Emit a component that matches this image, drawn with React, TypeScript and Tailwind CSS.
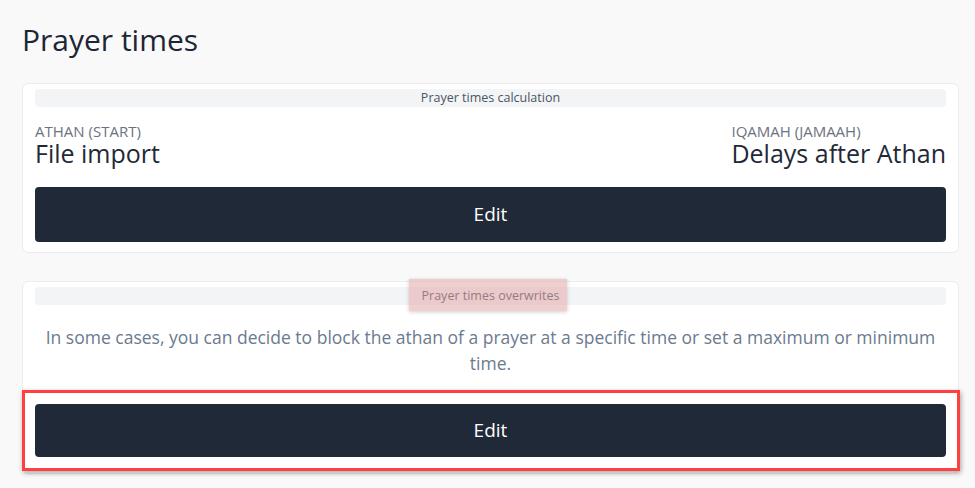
import React from 'react';

const font = { fontFamily: '"Open Sans", "Noto Sans", sans-serif' };

function SectionBar({ label, highlight }: { label: string; highlight?: boolean }) {
  return (
    <div className="relative flex h-[18px] items-center justify-center rounded-sm bg-[#f3f4f6]">
      <span className="text-[12.5px] leading-none text-[#4b5563]">{label}</span>
      {highlight && (
        <div className="absolute left-1/2 top-[-8px] h-[32px] w-[158px] -translate-x-[82px] bg-[#e2a0a0]/50 shadow-[0_1px_4px_rgba(0,0,0,0.2)]" />
      )}
    </div>
  );
}

function EditButton({ tall }: { tall?: boolean }) {
  return (
    <button
      className={`flex w-full items-center justify-center rounded-[4px] bg-[#1f2937] text-[19px] text-white ${
        tall ? 'h-[55px]' : 'h-[53px]'
      }`}
    >
      Edit
    </button>
  );
}

export default function App() {
  return (
    <div className="min-h-screen bg-[#f9f9f9] px-[22px] pt-[19px] pb-10 text-[#1f2937]" style={font}>
      <h1 className="text-[30px] leading-[42px] text-[#1e2535]">Prayer times</h1>

      <div className="mt-[22px] flex w-[937px] flex-col gap-[28px]">
        {/* Calculation */}
        <div className="rounded-md border border-[#ececec] bg-white px-3 pt-[5px] pb-[10px]">
          <SectionBar label="Prayer times calculation" />
          <div className="mt-[14px] flex items-start justify-between">
            <div>
              <div className="text-[15px] leading-[20px] text-[#6b7280]">ATHAN (START)</div>
              <div className="text-[25px] leading-[24px]">File import</div>
            </div>
            <div className="text-left">
              <div className="text-[15px] leading-[20px] text-[#6b7280]">IQAMAH (JAMAAH)</div>
              <div className="text-[25px] leading-[24px]">Delays after Athan</div>
            </div>
          </div>
          <div className="mt-[22px]">
            <EditButton tall />
          </div>
        </div>

        {/* Overwrites */}
        <div className="rounded-md border border-[#ececec] bg-white px-3 pt-[5px] pb-[16px]">
          <SectionBar label="Prayer times overwrites" highlight />
          <p className="mt-[19px] px-2 text-center text-[17.5px] leading-[26px] text-[#6b7a8f]">
            In some cases, you can decide to block the athan of a prayer at a specific time or set a maximum or minimum
            time.
          </p>
          <div className="relative mt-[28px]">
            <EditButton />
            <div className="pointer-events-none absolute -top-[14px] -bottom-[14px] -left-[13px] -right-[14px] border-[3px] border-[#ff4040] shadow-[1px_2px_5px_rgba(0,0,0,0.35)]" />
          </div>
        </div>
      </div>
    </div>
  );
}
